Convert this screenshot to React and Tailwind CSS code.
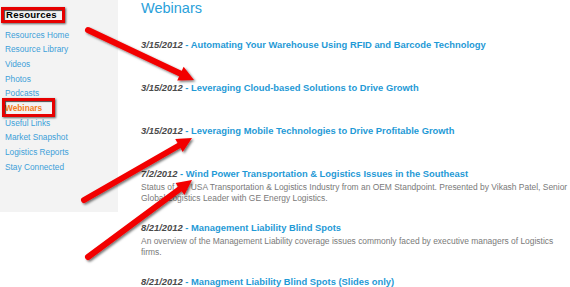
import React from "react";

const links = [
  "Resources Home",
  "Resource Library",
  "Videos",
  "Photos",
  "Podcasts",
  "Webinars",
  "Useful Links",
  "Market Snapshot",
  "Logistics Reports",
  "Stay Connected",
];

const webinars = [
  { date: "3/15/2012", title: "Automating Your Warehouse Using RFID and Barcode Technology" },
  { date: "3/15/2012", title: "Leveraging Cloud-based Solutions to Drive Growth" },
  { date: "3/15/2012", title: "Leveraging Mobile Technologies to Drive Profitable Growth" },
  {
    date: "7/2/2012",
    title: "Wind Power Transportation & Logistics Issues in the Southeast",
    desc: "Status of the USA Transportation & Logistics Industry from an OEM Standpoint. Presented by Vikash Patel, Senior Global Logistics Leader with GE Energy Logistics.",
  },
  {
    date: "8/21/2012",
    title: "Management Liability Blind Spots",
    desc: "An overview of the Management Liability coverage issues commonly faced by executive managers of Logistics firms.",
  },
  { date: "8/21/2012", title: "Managment Liability Blind Spots (Slides only)" },
];

// red annotation arrows: tail -> tip
const arrows = [
  [88, 30, 194, 80],
  [84, 200, 192, 138],
  [88, 257, 192, 180],
];

const head = ([x1, y1, x2, y2]) => {
  const len = Math.hypot(x2 - x1, y2 - y1);
  const ux = (x2 - x1) / len;
  const uy = (y2 - y1) / len;
  const bx = x2 - ux * 15;
  const by = y2 - uy * 15;
  return `${x2},${y2} ${bx - uy * 7.5},${by + ux * 7.5} ${bx + uy * 7.5},${by - ux * 7.5}`;
};

const Arrows = () => (
  <svg className="absolute inset-0 pointer-events-none" width="570" height="287">
    <defs>
      <filter id="sh" x="-20%" y="-20%" width="140%" height="140%">
        <feDropShadow dx="1.5" dy="1.5" stdDeviation="1.2" floodColor="#000" floodOpacity="0.55" />
      </filter>
    </defs>
    {arrows.map((a, i) => {
      const len = Math.hypot(a[2] - a[0], a[3] - a[1]);
      const ex = a[2] - ((a[2] - a[0]) / len) * 10;
      const ey = a[3] - ((a[3] - a[1]) / len) * 10;
      return (
        <g key={i} filter="url(#sh)">
          <line x1={a[0]} y1={a[1]} x2={ex} y2={ey} stroke="#f20000" strokeWidth="6" strokeLinecap="round" />
          <polygon points={head(a)} fill="#f20000" />
        </g>
      );
    })}
  </svg>
);

export default function App() {
  return (
    <div className="relative w-[570px] h-[287px] overflow-hidden bg-white flex font-['Liberation_Sans',Arial,sans-serif]">
      {/* SIDEBAR */}
      <div className="w-[118px] h-[212px] bg-[#f3f3f3] shrink-0 pt-[9px] pl-[6px]">
        <div className="text-[9.6px] leading-[12px] h-[12px]">
          <span className="relative inline-block font-bold text-black tracking-[0.2px]">
            Resources
            <span className="absolute -left-[5px] -top-[2px] w-[64px] h-[16px] border-[3px] border-[#e60000] shadow-[1px_1px_2px_rgba(0,0,0,0.6),inset_1px_1px_1px_rgba(0,0,0,0.7)]" />
          </span>
        </div>
        <ul className="mt-[6.5px] -ml-[1px]">
          {links.map((l) => (
            <li key={l} className="text-[8.3px] leading-[14.7px] h-[14.7px]">
              {l === "Webinars" ? (
                <span className="relative inline-block font-bold text-[#f47b20]">
                  {l}
                  <span className="absolute -left-[3px] -top-[2.5px] w-[53px] h-[19px] border-[3px] border-[#e60000] shadow-[1px_1px_2px_rgba(0,0,0,0.6),inset_1px_1px_1px_rgba(0,0,0,0.7)]" />
                </span>
              ) : (
                <span className="text-[#3d9fd9]">{l}</span>
              )}
            </li>
          ))}
        </ul>
      </div>

      {/* MAIN */}
      <div className="ml-[23px] w-[428px] shrink-0">
        <h1 className="text-[14.5px] leading-[16px] h-[16px] text-[#2aa1da] font-normal">Webinars</h1>
        <div className="mt-[21.5px]">
          {webinars.map((w, i) => (
            <div key={i} className={w.desc ? "mb-[16px]" : "mb-[30px]"}>
              <div className="text-[9.4px] leading-[13px] h-[13px] font-bold whitespace-nowrap">
                <span className="italic text-[#4a4a4a]">{w.date}</span>
                <span className="text-[#1f9ad6]"> - {w.title}</span>
              </div>
              {w.desc && (
                <p className="mt-[2px] text-[8.45px] leading-[11.5px] text-[#7a7a7a]">{w.desc}</p>
              )}
            </div>
          ))}
        </div>
      </div>

      <Arrows />
    </div>
  );
}
